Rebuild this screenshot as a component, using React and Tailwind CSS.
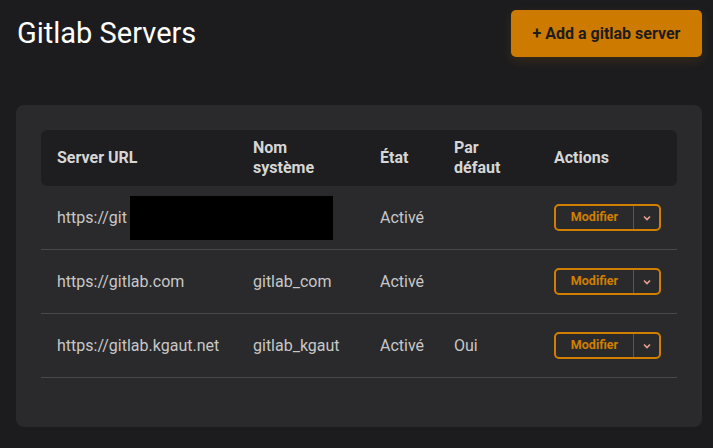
import React from 'react'

const servers = [
  { url: 'https://git', name: '', state: 'Activé', def: '', redacted: true },
  { url: 'https://gitlab.com', name: 'gitlab_com', state: 'Activé', def: '' },
  { url: 'https://gitlab.kgaut.net', name: 'gitlab_kgaut', state: 'Activé', def: 'Oui' },
];

const ActionButton = () => (
  <div className="flex h-[27px] w-[107px] rounded-[5px] border-2 border-[#d17f00]">
    <button className="flex-1 text-[12.5px] font-bold text-[#d17f00]">Modifier</button>
    <div className="w-px bg-[#7a4a3a]"></div>
    <button className="flex w-[25px] items-center justify-center text-[#e8a090]">
      <svg width="10" height="10" viewBox="0 0 10 10" fill="none" stroke="currentColor" strokeWidth="1.6">
        <path d="M2 3.5 L5 6.5 L8 3.5" />
      </svg>
    </button>
  </div>
);

const App = () => {
  return (
    <div className="min-h-screen w-full bg-[#1c1c1e] pl-[16px] pr-[11px] pt-[10px]" style={{ fontFamily: 'Roboto, "Liberation Sans", sans-serif' }}>
      <div className="flex items-start justify-between">
        <h1 className="mt-[5px] pl-[1px] text-[29px] font-normal leading-[36px] text-white">Gitlab Servers</h1>
        <button className="h-[47px] w-[191px] rounded-[5px] bg-[#cc7a00] text-[16px] font-bold text-[#1c1c1e] shadow-[0_4px_12px_rgba(204,122,0,0.15)]">
          + Add a gitlab server
        </button>
      </div>

      <div className="mt-[48px] h-[322px] rounded-[8px] bg-[#2a2a2c] px-[25px] pt-[25px]">
        <table className="w-full table-fixed border-separate border-spacing-0 text-left">
          <colgroup>
            <col className="w-[196px]" />
            <col className="w-[127px]" />
            <col className="w-[74px]" />
            <col className="w-[100px]" />
            <col className="w-[139px]" />
          </colgroup>
          <thead>
            <tr className="h-[56px] text-[16px] font-bold leading-[20px] text-[#d6d6d6]">
              <th className="rounded-l-[6px] bg-[#1e1e20] pl-[16px]">Server URL</th>
              <th className="bg-[#1e1e20] pl-[16px]">Nom<br />système</th>
              <th className="bg-[#1e1e20] pl-[16px]">État</th>
              <th className="bg-[#1e1e20] pl-[16px]">Par<br />défaut</th>
              <th className="rounded-r-[6px] bg-[#1e1e20] pl-[16px]">Actions</th>
            </tr>
          </thead>
          <tbody className="text-[16px] text-[#c8c8c8]">
            {servers.map((s, i) => (
              <tr key={i}>
                <td className="h-[64px] border-b border-[#48484a] pl-[16px]">
                  {s.redacted ? (
                    <div className="flex items-center">
                      <span>{s.url}</span>
                      <div className="ml-[3px] h-[44px] w-[203px] shrink-0 bg-black"></div>
                    </div>
                  ) : (
                    s.url
                  )}
                </td>
                <td className="h-[64px] border-b border-[#48484a] pl-[16px]">{s.name}</td>
                <td className="h-[64px] border-b border-[#48484a] pl-[16px]">{s.state}</td>
                <td className="h-[64px] border-b border-[#48484a] pl-[16px]">{s.def}</td>
                <td className="h-[64px] border-b border-[#48484a] pl-[16px]"><ActionButton /></td>
              </tr>
            ))}
          </tbody>
        </table>
      </div>
    </div>
  );
};

export default App;
